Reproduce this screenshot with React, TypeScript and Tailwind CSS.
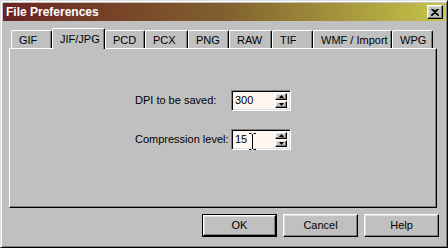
import React from "react"

const tabs = [
  { label: "GIF", w: 41 },
  { label: "JIF/JPG", w: 53, active: true },
  { label: "PCD", w: 40 },
  { label: "PCX", w: 43 },
  { label: "PNG", w: 41 },
  { label: "RAW", w: 43 },
  { label: "TIF", w: 41 },
  { label: "WMF / Import", w: 79 },
  { label: "WPG", w: 41 },
]

const raised =
  "border border-t-white border-l-white border-r-black border-b-black shadow-[inset_-1px_-1px_#808080,inset_1px_1px_#dfdfdf]"
const sunken =
  "border border-t-[#808080] border-l-[#808080] border-r-white border-b-white shadow-[inset_1px_1px_#000,inset_-1px_-1px_#dfdfdf]"

function Spin() {
  return (
    <div className="flex flex-col gap-[1px]">
      {["up", "down"].map((d) => (
        <div key={d} className={`flex h-[7px] w-[12px] items-center justify-center bg-[#c0c0c0] ${raised}`}>
          <svg width="5" height="3" viewBox="0 0 5 3">
            {d === "up" ? <path d="M2.5 0 L5 3 L0 3 Z" fill="#000" /> : <path d="M0 0 L5 0 L2.5 3 Z" fill="#000" />}
          </svg>
        </div>
      ))}
    </div>
  )
}

function Field({ label, value, cursor }: { label: string; value: string; cursor?: boolean }) {
  return (
    <div className="flex items-center">
      <span className="w-[96px]">{label}</span>
      <div className={`relative flex h-[21px] w-[60px] items-center justify-between bg-[#fff6f0] pl-[3px] pr-[3px] ${sunken}`}>
        <span className="leading-none">{value}</span>
        <Spin />
        {cursor && (
          <svg className="absolute left-[17px] top-[3px]" width="7" height="17" viewBox="0 0 7 17">
            <path d="M0 0.5 H2.5 M4.5 0.5 H7 M3.5 1 V16 M0 16.5 H2.5 M4.5 16.5 H7" stroke="#000" strokeWidth="1" fill="none" />
          </svg>
        )}
      </div>
    </div>
  )
}

export default function App() {
  return (
    <div
      className="flex h-[248px] w-[448px] flex-col border border-t-[#dfdfdf] border-l-[#dfdfdf] border-r-black border-b-black bg-[#c0c0c0] p-[2px] text-[11px] text-black shadow-[inset_1px_1px_#fff,inset_-1px_-1px_#808080]"
      style={{ fontFamily: '"Liberation Sans", Arial, sans-serif' }}
    >
      <div className="flex h-[18px] items-center justify-between bg-gradient-to-r from-[#6b2222] via-[#80602e] to-[#c6c64a] pl-[3px] pr-[2px]">
        <span className="text-[12px] font-bold text-white">File Preferences</span>
        <div className={`flex h-[14px] w-[16px] items-center justify-center bg-[#c0c0c0] ${raised}`}>
          <svg width="8" height="7" viewBox="0 0 8 7">
            <path d="M0.5 0 L7.5 7 M1.5 0 L8 6.5 M7.5 0 L0.5 7 M6.5 0 L0 6.5" stroke="#000" strokeWidth="1.2" />
          </svg>
        </div>
      </div>

      <div className="pl-[6px] pr-[8px] pt-[7px]">
        <div className="relative z-10 flex h-[20px] items-end pl-[2px]">
          {tabs.map((t) => (
            <div
              key={t.label}
              style={{ width: t.w }}
              className={`flex items-center rounded-t-[2px] border-l border-t border-r border-l-white border-t-white border-r-black bg-[#c0c0c0] shadow-[inset_-1px_0_#808080] ${
                t.active ? "-mb-px h-[21px] pl-[7px] pt-0" : "h-[18px] pl-[7px] pt-[2px]"
              }`}
            >
              {t.label}
            </div>
          ))}
        </div>
        <div
          className={`flex h-[160px] flex-col gap-[18px] pl-[125px] pt-[41px] border border-t-white border-l-white border-r-black border-b-black shadow-[inset_-1px_-1px_#808080]`}
        >
          <Field label="DPI to be saved:" value="300" />
          <Field label="Compression level:" value="15" cursor />
        </div>
      </div>

      <div className="mt-[6px] flex justify-end gap-[6px] pr-[6px]">
        <div className="flex h-[23px] w-[75px] items-center justify-center border border-black">
          <div className={`flex h-full w-full items-center justify-center bg-[#c0c0c0] ${raised}`}>OK</div>
        </div>
        <div className={`flex h-[23px] w-[75px] items-center justify-center bg-[#c0c0c0] ${raised}`}>Cancel</div>
        <div className={`flex h-[23px] w-[75px] items-center justify-center bg-[#c0c0c0] ${raised}`}>Help</div>
      </div>
    </div>
  )
}
